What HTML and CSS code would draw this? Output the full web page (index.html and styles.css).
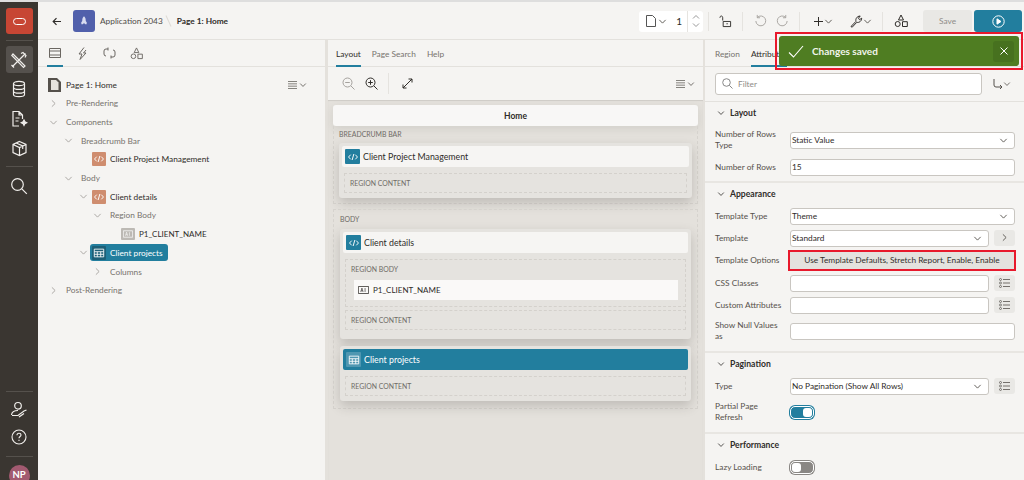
FILE: index.html
```html
<!DOCTYPE html>
<html lang="en">
<head>
  <meta charset="UTF-8">
  <title>Page Designer</title>
  <link rel="stylesheet" href="styles.css">
</head>
<body>
  <svg class="defs" width="0" height="0">
    <symbol id="chev-d" viewBox="0 0 10 10"><path d="M1.5 3.2 5 6.8l3.500-3.600" fill="none" stroke="currentColor"/></symbol>
    <symbol id="chev-r" viewBox="0 0 10 10"><path d="M3.200 1.500 6.800 5 3.200 8.500" fill="none" stroke="currentColor"/></symbol>
    <symbol id="menu" viewBox="0 0 9 8"><path d="M0 .5h9M0 2.830h9M0 5.170h9M0 7.500h9" fill="none" stroke="currentColor" stroke-width=".7"/></symbol>
    <symbol id="code" viewBox="0 0 14 14"><path d="M4.300 4.300 1.800 7l2.500 2.700M9.700 4.300 12.200 7 9.700 9.700M8 3.500 6 10.500" fill="none" stroke="currentColor" stroke-width="1.100"/></symbol>
    <symbol id="table" viewBox="0 0 14 14"><path d="M1.500 2.500h11v9h-11zM1.500 5.500h11M1.500 8.500h11M5 5.500v6M9 5.500v6" fill="none" stroke="currentColor"/></symbol>
    <symbol id="list" viewBox="0 0 11 10"><path d="M4 1.500h7M4 5h7M4 8.500h7" fill="none" stroke="currentColor" stroke-width=".8"/><circle cx="1.500" cy="1.500" r="1" fill="none" stroke="currentColor" stroke-width=".7"/><circle cx="1.500" cy="5" r="1" fill="none" stroke="currentColor" stroke-width=".7"/><circle cx="1.500" cy="8.500" r="1" fill="none" stroke="currentColor" stroke-width=".7"/></symbol>
    <symbol id="shapes" viewBox="0 0 14 14"><path d="M7 1 9.500 6h-5z" fill="none" stroke="currentColor"/><circle cx="3.700" cy="10" r="2.500" fill="none" stroke="currentColor"/><path d="M8.500 7.700h4.800v4.800H8.500z" fill="none" stroke="currentColor"/></symbol>
    <symbol id="wrench" viewBox="0 0 14 14"><path d="M2 12.500 7 7.300C6.300 5 7.800 2.200 11.200 2L9.500 4.200 10.500 5.700 12.700 4.200C12.800 7 10 9 7.800 8.300L3.200 13.200z" fill="none" stroke="currentColor"/></symbol>
    <symbol id="item" viewBox="0 0 14 10"><path d="M.5.500h13v9H.5z" fill="none" stroke="currentColor"/><path d="M3.500 7.500 5 2.500l1.500 5M4 6h2M9 2.500v5" fill="none" stroke="currentColor" stroke-width=".8"/></symbol>
  </svg>

  <!-- Left icon rail -->
  <nav class="rail">
    <div class="logo"><span class="logo-ring"></span></div>
    <div class="rail-sep"></div>
    <div class="rail-btn active">
      <svg width="18" height="18" viewBox="0 0 18 18" fill="none" stroke="currentColor" stroke-width="1.200"><path d="M3 3 15 15l-1.500 1.500L1.800 4.500zM15.500 2.500 2.500 15.500M11 2.500l2-1 3 3-1 2"/><path d="M1.500 14l2.500 2.500"/></svg>
    </div>
    <div class="rail-btn">
      <svg width="16" height="18" viewBox="0 0 16 18" fill="none" stroke="currentColor" stroke-width="1.200"><ellipse cx="8" cy="3.500" rx="5.500" ry="2.200"/><path d="M2.500 3.500v11c0 1.200 2.500 2.200 5.500 2.200s5.500-1 5.500-2.200v-11M2.500 7.200c0 1.200 2.500 2.200 5.500 2.200s5.500-1 5.500-2.200M2.500 10.900c0 1.200 2.500 2.200 5.500 2.200s5.500-1 5.500-2.200"/></svg>
    </div>
    <div class="rail-btn">
      <svg width="18" height="18" viewBox="0 0 18 18" fill="none" stroke="currentColor" stroke-width="1.200"><path d="M9 16H3V1.500h6l3.500 3.500v4M9 1.500V5h3.500M5.500 8h4M5.500 11h3"/><path d="m14 10 .9 1.800 1.800.9-1.800.9-.9 1.800-.9-1.800-1.800-.9 1.800-.9z" fill="currentColor"/></svg>
    </div>
    <div class="rail-btn">
      <svg width="17" height="17" viewBox="0 0 17 17" fill="none" stroke="currentColor" stroke-width="1.200"><path d="M8.500 1.500 15 4.500v8l-6.500 3-6.500-3v-8zM2 4.500l6.500 3 6.500-3M8.500 7.500v8M5.200 3 11.700 6v3"/></svg>
    </div>
    <div class="rail-sep mid"></div>
    <div class="rail-btn">
      <svg width="18" height="18" viewBox="0 0 18 18" fill="none" stroke="currentColor" stroke-width="1.200"><circle cx="7.500" cy="7.500" r="5.800"/><path d="m11.800 11.800 5 5"/></svg>
    </div>
    <div class="rail-fill"></div>
    <div class="rail-sep low"></div>
    <div class="rail-btn flush">
      <svg width="18" height="18" viewBox="0 0 18 18" fill="none" stroke="currentColor" stroke-width="1.200"><circle cx="8" cy="4.800" r="3.300"/><path d="M1.500 14c.3-3 2.500-4.500 6.500-4.500M2 14.500h6l6-4.500 2.500-1M9 16l5-3.500"/></svg>
    </div>
    <div class="rail-btn">
      <svg width="16" height="16" viewBox="0 0 16 16" fill="none" stroke="currentColor" stroke-width="1.100"><circle cx="8" cy="8" r="7"/><path d="M6 6.200C6 4.900 7 4.200 8 4.200s2 .7 2 1.900C10 7.500 8 7.500 8 9.200"/><path d="M8 10.800v1.200"/></svg>
    </div>
    <div class="rail-sep last"></div>
    <div class="avatar">NP</div>
  </nav>

  <div class="app">
    <!-- Top toolbar -->
    <header class="topbar">
      <svg class="back" width="10" height="9" viewBox="0 0 10 9" fill="none" stroke="currentColor" stroke-width="1.200"><path d="M9 4.500H1.500M4.500 1.200 1.200 4.500l3.300 3.300"/></svg>
      <div class="app-icon">
        <svg width="8" height="10" viewBox="0 0 10 12" fill="#d9dcf0"><path d="M5 0c1.700 1.500 2.300 3.500 2.200 6l1.300 2-.3 2H6.500l-.5-1H4l-.5 1H1.800l-.3-2 1.300-2C2.700 3.500 3.300 1.500 5 0z"/></svg>
      </div>
      <span class="app-name">Application 2043</span>
      <span class="crumb-sep"></span>
      <strong class="page-name">Page 1: Home</strong>
      <div class="topbar-fill"></div>
      <div class="page-box">
        <svg width="10" height="12" viewBox="0 0 10 12" fill="none" stroke="#555"><path d="M.5.500h6l3 3v8h-9z"/></svg>
        <svg class="chev" width="9" height="9"><use href="#chev-d"/></svg>
        <span class="page-num">1</span>
        <span class="page-spin">
          <svg width="8" height="8" viewBox="0 0 8 8" fill="none" stroke="#999"><path d="M1 5.500 4 2.500l3 3"/></svg>
          <svg width="8" height="8" viewBox="0 0 8 8" fill="none" stroke="#999"><path d="M1 2.500 4 5.500l3-3"/></svg>
        </span>
      </div>
      <span class="tool-sep first"></span>
      <svg class="tool" width="13" height="14" viewBox="0 0 14 14" fill="none" stroke="currentColor"><path d="M4.500 7.500h8v5.500h-8zM4 6.500V3.500C4 1 1 1 1 3.500"/><path d="M8 10h1.500"/></svg>
      <span class="tool-sep"></span>
      <svg class="tool faded" width="13" height="14" viewBox="0 0 14 14" fill="none" stroke="currentColor"><path d="M3.500 3.200A5.300 5.300 0 1 1 2 7M3.500.5v3h3"/></svg>
      <svg class="tool faded gap" width="13" height="14" viewBox="0 0 14 14" fill="none" stroke="currentColor"><path d="M10.500 3.200A5.300 5.300 0 1 0 12 7M10.500.5v3h-3"/></svg>
      <span class="tool-sep"></span>
      <svg class="tool plus" width="11" height="11" viewBox="0 0 11 11" fill="none" stroke="currentColor"><path d="M5.500 1v9M1 5.500h9"/></svg>
      <svg class="chev" width="9" height="9"><use href="#chev-d"/></svg>
      <svg class="tool wide" width="14" height="14"><use href="#wrench"/></svg>
      <svg class="chev" width="9" height="9"><use href="#chev-d"/></svg>
      <span class="tool-sep"></span>
      <svg class="tool" width="14" height="14"><use href="#shapes"/></svg>
      <button class="btn-save">Save</button>
      <button class="btn-run">
        <svg width="13" height="13" viewBox="0 0 13 13" fill="none" stroke="#fff"><circle cx="6.500" cy="6.500" r="5.700"/><path d="M5 3.800 9 6.500 5 9.200z" fill="#fff"/></svg>
      </button>
    </header>

    <div class="panes">
      <!-- Tree pane -->
      <section class="pane-tree">
        <div class="tabs icon-tabs">
          <span class="icon-tab current">
            <svg width="12" height="10" viewBox="0 0 12 10" fill="none" stroke="currentColor"><path d="M.5.500h11v9H.5zM.5 3h11M.5 7h11"/></svg>
          </span>
          <span class="icon-tab">
            <svg width="11" height="13" viewBox="0 0 11 13" fill="none" stroke="currentColor"><path d="M7 .5 2 7h3l-2 5.500M9 3 6.500 6H9l-6 6.500"/></svg>
          </span>
          <span class="icon-tab">
            <svg width="13" height="12" viewBox="0 0 13 12" fill="none" stroke="currentColor"><path d="M5 2H3Q1 2 1 4v3q0 2 2 2M8 10h2q2 0 2-2V5q0-2-2-2M5 .5V3.500M8 8.500v3"/></svg>
          </span>
          <span class="icon-tab">
            <svg width="13" height="13"><use href="#shapes"/></svg>
          </span>
        </div>
        <div class="tree">
          <div class="tree-head">
            <span class="page-icon">
              <svg width="13" height="14" viewBox="0 0 13 14"><path d="M0 0h9l4 4v10H0z" fill="#55514c"/><path d="M3 2h5l2.500 2.500V12H3z" fill="#e6e3de"/></svg>
            </span>
            <span class="tree-title">Page 1: Home</span>
            <span class="menu-btn"><svg width="9" height="8"><use href="#menu"/></svg><svg width="8" height="8"><use href="#chev-d"/></svg></span>
          </div>
          <div class="node lv1"><svg class="tw" width="9" height="9"><use href="#chev-r"/></svg><span class="group">Pre-Rendering</span></div>
          <div class="node lv1"><svg class="tw" width="9" height="9"><use href="#chev-d"/></svg><span class="group">Components</span></div>
          <div class="node lv2"><svg class="tw" width="9" height="9"><use href="#chev-d"/></svg><span class="group">Breadcrumb Bar</span></div>
          <div class="node lv3 leaf"><span class="node-icon orange"><svg width="12" height="12"><use href="#code"/></svg></span><span>Client Project Management</span></div>
          <div class="node lv2"><svg class="tw" width="9" height="9"><use href="#chev-d"/></svg><span class="group">Body</span></div>
          <div class="node lv3"><svg class="tw" width="9" height="9"><use href="#chev-d"/></svg><span class="node-icon orange"><svg width="12" height="12"><use href="#code"/></svg></span><span>Client details</span></div>
          <div class="node lv4"><svg class="tw" width="9" height="9"><use href="#chev-d"/></svg><span class="group">Region Body</span></div>
          <div class="node lv5"><span class="node-icon grey"><svg width="10" height="8"><use href="#item"/></svg></span><span class="item-name">P1_CLIENT_NAME</span></div>
          <div class="node lv3">
            <svg class="tw" width="9" height="9"><use href="#chev-d"/></svg>
            <span class="pill"><span class="node-icon dark"><svg width="12" height="12"><use href="#table"/></svg></span><span>Client projects</span></span>
          </div>
          <div class="node lv4"><svg class="tw" width="9" height="9"><use href="#chev-r"/></svg><span class="group">Columns</span></div>
          <div class="node lv1"><svg class="tw" width="9" height="9"><use href="#chev-r"/></svg><span class="group">Post-Rendering</span></div>
        </div>
      </section>

      <!-- Layout pane -->
      <section class="pane-layout">
        <div class="tabs text-tabs">
          <span class="text-tab current">Layout</span>
          <span class="text-tab">Page Search</span>
          <span class="text-tab">Help</span>
        </div>
        <div class="layout-tools">
          <svg class="faded" width="13" height="13" viewBox="0 0 13 13" fill="none" stroke="currentColor"><circle cx="5.500" cy="5.500" r="4.500"/><path d="m9 9 3.500 3.500M3.200 5.500h4.600"/></svg>
          <svg width="13" height="13" viewBox="0 0 13 13" fill="none" stroke="currentColor"><circle cx="5.500" cy="5.500" r="4.500"/><path d="m9 9 3.500 3.500M3.200 5.500h4.600M5.500 3.200v4.600"/></svg>
          <span class="tool-sep tall"></span>
          <svg width="11" height="11" viewBox="0 0 11 11" fill="none" stroke="currentColor"><path d="M1 10 10 1M6.500 1H10v3.500M1 6.500V10h3.500"/></svg>
          <span class="menu-btn"><svg width="9" height="8"><use href="#menu"/></svg><svg width="8" height="8"><use href="#chev-d"/></svg></span>
        </div>
        <div class="canvas">
          <div class="page-head">Home</div>
          <div class="drop drop-bar">
            <div class="drop-label">BREADCRUMB BAR</div>
            <div class="card">
              <div class="card-head"><span class="card-icon"><svg width="12" height="12"><use href="#code"/></svg></span>Client Project Management</div>
              <div class="slot">REGION CONTENT</div>
            </div>
          </div>
          <div class="drop drop-body">
            <div class="drop-label">BODY</div>
            <div class="card">
              <div class="card-head"><span class="card-icon"><svg width="12" height="12"><use href="#code"/></svg></span>Client details</div>
              <div class="slot slot-body">
                REGION BODY
                <div class="page-item"><svg width="11" height="8"><use href="#item"/></svg><span class="item-name">P1_CLIENT_NAME</span></div>
              </div>
              <div class="slot slot-tight">REGION CONTENT</div>
            </div>
            <div class="card">
              <div class="card-head selected"><span class="card-icon pale"><svg width="12" height="12"><use href="#table"/></svg></span>Client projects</div>
              <div class="slot">REGION CONTENT</div>
            </div>
          </div>
        </div>
      </section>

      <!-- Property pane -->
      <section class="pane-props">
        <div class="tabs text-tabs props-tabs">
          <span class="text-tab">Region</span>
          <span class="text-tab current">Attributes</span>
        </div>
        <div class="filter-row">
          <div class="filter">
            <svg width="11" height="11" viewBox="0 0 11 11" fill="none" stroke="#888"><circle cx="4.500" cy="4.500" r="3.800"/><path d="m7.300 7.300 3.200 3.200"/></svg>
            Filter
          </div>
          <svg class="route" width="10" height="10" viewBox="0 0 10 10" fill="none" stroke="currentColor"><path d="M1 0v6q0 2 2 2h6M7 6l2 2-2 2"/></svg>
          <svg class="chev" width="8" height="8"><use href="#chev-d"/></svg>
        </div>

        <div class="group-box lead">
          <h3 class="group-title"><svg width="8" height="8"><use href="#chev-d"/></svg>Layout</h3>
          <div class="row tall"><label>Number of Rows<br>Type</label><div class="field select">Static Value<svg width="9" height="9"><use href="#chev-d"/></svg></div></div>
          <div class="row"><label>Number of Rows</label><div class="field">15</div></div>
        </div>

        <div class="group-box">
          <h3 class="group-title"><svg width="8" height="8"><use href="#chev-d"/></svg>Appearance</h3>
          <div class="row"><label>Template Type</label><div class="field select">Theme<svg width="9" height="9"><use href="#chev-d"/></svg></div></div>
          <div class="row"><label>Template</label><div class="with-btn"><div class="field select">Standard<svg width="9" height="9"><use href="#chev-d"/></svg></div><span class="side-btn"><svg width="9" height="9"><use href="#chev-r"/></svg></span></div></div>
          <div class="row options"><label>Template Options</label><div class="options-btn">Use Template Defaults, Stretch Report, Enable, Enable</div></div>
          <div class="row"><label>CSS Classes</label><div class="with-btn"><div class="field"></div><span class="side-btn"><svg width="11" height="10"><use href="#list"/></svg></span></div></div>
          <div class="row"><label>Custom Attributes</label><div class="with-btn"><div class="field"></div><span class="side-btn"><svg width="11" height="10"><use href="#list"/></svg></span></div></div>
          <div class="row tall"><label>Show Null Values<br>as</label><div class="field"></div></div>
        </div>

        <div class="group-box">
          <h3 class="group-title"><svg width="8" height="8"><use href="#chev-d"/></svg>Pagination</h3>
          <div class="row"><label>Type</label><div class="with-btn"><div class="field select">No Pagination (Show All Rows)<svg width="9" height="9"><use href="#chev-d"/></svg></div><span class="side-btn"><svg width="11" height="10"><use href="#list"/></svg></span></div></div>
          <div class="row tall"><label>Partial Page<br>Refresh</label><span class="switch on"><i></i></span></div>
        </div>

        <div class="group-box">
          <h3 class="group-title"><svg width="8" height="8"><use href="#chev-d"/></svg>Performance</h3>
          <div class="row"><label>Lazy Loading</label><span class="switch"><i></i></span></div>
        </div>
      </section>
    </div>
  </div>

  <!-- Success message, floats over the toolbar -->
  <div class="toast-frame">
    <div class="toast">
      <svg width="16" height="13" viewBox="0 0 16 13" fill="none" stroke="#fff" stroke-width="1.100"><path d="M1 7.500 5.500 12 15 1"/></svg>
      <span class="toast-text">Changes saved</span>
      <span class="toast-close"><svg width="8" height="8" viewBox="0 0 8 8" fill="none" stroke="#fff"><path d="m.5.500 7 7M7.500.500l-7 7"/></svg></span>
    </div>
  </div>
</body>
</html>
```

FILE: styles.css
```css
/* General */
html, body {
  height: 100%;
}

body {
  margin: 0;
  display: flex;
  width: 1024px;
  height: 480px;
  box-sizing: border-box;
  padding-top: 2px;
  overflow: hidden;
  background: #dedede;
  color: #2f2c29;
  font-family: Lato, "Open Sans", sans-serif;
  font-size: 8.300px;
}

svg {
  flex: none;
  display: block;
}

.defs {
  position: absolute;
}

.faded {
  color: #a5a29e;
}

/* Icon rail */
.rail {
  width: 38px;
  height: 478px;
  flex: none;
  display: flex;
  flex-direction: column;
  align-items: center;
  overflow: hidden;
  background: #3a3631;
  color: #f1efec;
}

.logo {
  width: 27px;
  height: 26px;
  margin-top: 6px;
  display: flex;
  align-items: center;
  justify-content: center;
  border-radius: 3px;
  background: #c74634;
}

.logo-ring {
  width: 11px;
  height: 5px;
  border: 1.500px solid #fff;
  border-radius: 4px;
}

.rail-sep {
  width: 27px;
  height: 1px;
  flex: none;
  margin: 6px 0 5px;
  background: #55514c;
}

.rail-sep.mid {
  margin-top: 2px;
}

.rail-sep.low {
  margin-bottom: 5px;
}

.rail-sep.last {
  margin: 3px 0 8px;
}

.rail-btn {
  width: 27px;
  height: 27px;
  flex: none;
  margin-bottom: 2.500px;
  display: flex;
  align-items: center;
  justify-content: center;
  border-radius: 3px;
}

.rail-btn.flush {
  margin-bottom: 0;
}

.rail-btn.active {
  background: #55514d;
}

.rail-fill {
  flex: 1;
}

.avatar {
  width: 21px;
  height: 21px;
  flex: none;
  margin-bottom: -6px;
  border-radius: 50%;
  background: #a25a70;
  color: #fff;
  font-size: 9.500px;
  font-weight: 700;
  line-height: 19px;
  text-align: center;
}

/* Main area */
.app {
  flex: 1;
  min-width: 0;
  display: flex;
  flex-direction: column;
  background: #f5f4f2;
}

.topbar {
  height: 38px;
  flex: none;
  display: flex;
  align-items: center;
  padding: 1px 0 0 14px;
  border-bottom: 1px solid #e3e1dd;
  box-sizing: border-box;
}

.back {
  margin-right: 11px;
}

.app-icon {
  width: 22px;
  height: 22px;
  display: flex;
  align-items: center;
  justify-content: center;
  border-radius: 3px;
  background: #5160ab;
}

.app-name {
  margin-left: 5px;
  color: #4f4c48;
}

.crumb-sep {
  width: 1px;
  height: 12px;
  margin: 0 8px 0 5px;
  background: #dedbd6;
  transform: rotate(-25deg);
}

.page-name {
  font-weight: 700;
}

.topbar-fill {
  flex: 1;
}

.page-box {
  width: 64px;
  height: 21px;
  display: flex;
  align-items: center;
  padding-left: 7px;
  box-sizing: border-box;
  border-radius: 3px;
  background: #fff;
}

.page-box .chev {
  margin-left: 2px;
}

.page-num {
  margin-left: auto;
  margin-right: 5px;
  font-size: 10px;
}

.page-spin {
  width: 15px;
  height: 21px;
  display: flex;
  flex-direction: column;
  align-items: center;
  justify-content: center;
  border-left: 1px solid #e6e4e0;
}

.chev {
  color: #55514c;
}

.tool-sep {
  width: 1px;
  height: 19px;
  flex: none;
  margin: 0 11px 0 10px;
  background: #e5e3df;
}

.tool-sep.first {
  margin: 0 10px 0 5px;
}

.tool-sep.tall {
  height: 21px;
}

.tool.gap {
  margin-left: 9px;
}

.tool.plus {
  margin-left: 2px;
}

.tool.wide {
  margin-left: 16px;
}

.btn-save,
.btn-run {
  height: 22px;
  padding: 0;
  border: none;
  font: inherit;
}

.btn-save {
  width: 49px;
  margin-left: 15px;
  border-radius: 3px;
  background: #e9e8e5;
  color: #8f8c88;
}

.btn-run {
  width: 48px;
  margin: 0 2px;
  display: flex;
  align-items: center;
  justify-content: center;
  border-radius: 3px;
  background: #227e9e;
}

.panes {
  flex: 1;
  min-height: 0;
  display: flex;
}

/* Tabs */
.tabs {
  height: 27px;
  flex: none;
  display: flex;
  box-sizing: border-box;
  border-bottom: 1px solid #e3e1dd;
}

.icon-tabs {
  gap: 11px;
  padding-left: 9px;
}

.icon-tab {
  width: 16px;
  display: flex;
  align-items: center;
  justify-content: center;
  color: #6b6762;
}

.icon-tab.current {
  border-bottom: 2px solid #227e9e;
  margin-bottom: -1px;
}

.text-tabs {
  gap: 11px;
  padding-left: 8px;
}

.text-tab {
  line-height: 28px;
  color: #77736e;
}

.text-tab.current {
  color: #2f2c29;
  border-bottom: 2px solid #227e9e;
  margin-bottom: -1px;
}

/* Tree pane */
.pane-tree {
  width: 287px;
  flex: none;
  display: flex;
  flex-direction: column;
  border-right: 3px solid #e4e1dc;
}

.tree {
  padding-top: 8px;
}

.tree-head {
  height: 19px;
  display: flex;
  align-items: center;
  padding: 0 7px 0 10px;
}

.page-icon {
  margin-right: 5px;
}

.tree-title {
  flex: 1;
}

.menu-btn {
  display: flex;
  align-items: center;
  gap: 2px;
  margin-left: auto;
  color: #55514c;
  padding-right: 11px;
}

.node {
  height: 18.700px;
  display: flex;
  align-items: center;
}

.lv1 {
  padding-left: 11px;
}

.lv2 {
  padding-left: 26px;
}

.lv3 {
  padding-left: 41px;
}

.lv3.leaf {
  padding-left: 54px;
}

.lv4 {
  padding-left: 55px;
}

.lv5 {
  padding-left: 83px;
}

.tw {
  color: #a5a29e;
  margin-right: 8px;
}

.lv3 .tw {
  margin-right: 4px;
}

.group {
  color: #77736e;
}

.item-name {
  font-size: 8px;
}

.node-icon {
  width: 14px;
  height: 14px;
  margin-right: 4px;
  display: flex;
  align-items: center;
  justify-content: center;
  flex: none;
  border-radius: 1px;
  color: #fff;
}

.node-icon.orange {
  background: #cf8d6f;
}

.node-icon.grey {
  height: 12px;
  background: #bcb9b4;
}

.node-icon.dark {
  background: #1d5f77;
}

.pill {
  display: flex;
  align-items: center;
  height: 17px;
  margin-left: -2px;
  padding: 0 5px 0 2px;
  border-radius: 3px;
  background: #227e9e;
  color: #fff;
}

/* Layout pane */
.pane-layout {
  width: 375px;
  flex: none;
  display: flex;
  flex-direction: column;
}

.layout-tools {
  height: 33px;
  flex: none;
  display: flex;
  align-items: center;
  gap: 10px;
  padding-left: 14px;
  box-sizing: border-box;
}

.layout-tools .tool-sep {
  margin: 0 3px 0 0;
}

.layout-tools .menu-btn {
  margin-left: auto;
  padding-right: 8px;
}

.canvas {
  flex: 1;
  padding: 5px 5px 0;
  background: #e4e1dc;
  box-shadow: inset 0 1px 1px #cfccc7;
}

.page-head {
  height: 21px;
  border-radius: 3px;
  background: #f8f7f6;
  font-size: 8.500px;
  font-weight: 700;
  line-height: 22px;
  text-align: center;
  box-shadow: 0 3px 8px rgba(60, 55, 50, 0.1);
}

.drop {
  border: 1px dashed #d6d3ce;
  border-top: none;
  padding: 0 6px;
}

.drop-bar {
  height: 78px;
  box-sizing: border-box;
  margin-bottom: 5px;
  padding: 0 5px;
}

.drop-body {
  height: 200px;
  box-sizing: border-box;
  border-top: 1px dashed #d6d3ce;
}

.drop-label,
.slot {
  font-size: 6.900px;
  color: #6f6b66;
}

.drop-label {
  line-height: 17px;
}

.drop-body .drop-label {
  line-height: 19px;
}

.card {
  padding: 3px 3px 5px;
  margin-bottom: 7px;
  border-radius: 3px;
  background: #e5e3df;
  box-shadow: 0 5px 12px rgba(60, 55, 50, 0.22);
}

.card-head {
  height: 21px;
  display: flex;
  align-items: center;
  gap: 3px;
  padding-left: 3px;
  border-radius: 2px;
  background: #f6f5f3;
  color: #2f2c29;
  font-size: 8.800px;
}

.card-head.selected {
  background: #227e9e;
  color: #fff;
}

.card-icon {
  width: 15px;
  height: 15px;
  display: flex;
  align-items: center;
  justify-content: center;
  border-radius: 1px;
  background: #227e9e;
  color: #fff;
}

.card-icon.pale {
  background: #4f97b1;
}

.slot {
  margin: 6px 2px 0;
  padding-left: 5px;
  height: 20px;
  line-height: 19px;
  box-sizing: border-box;
  border: 1px dashed #d4d1cc;
}

.slot-body {
  height: 48px;
}

.slot-tight {
  margin-top: 3px;
  margin-bottom: 4px;
}

.page-item {
  display: flex;
  align-items: center;
  gap: 4px;
  height: 20px;
  margin: 1px 7px 0 3px;
  padding-left: 4px;
  background: #faf9f8;
  color: #2f2c29;
}

/* Property pane */
.pane-props {
  flex: 1;
  min-width: 0;
  border-left: 2px solid #e4e1dc;
  display: flex;
  flex-direction: column;
}

.props-tabs {
  padding-left: 10px;
  gap: 11px;
}

.filter-row {
  height: 35px;
  flex: none;
  display: flex;
  align-items: center;
  padding: 0 0 1px 10px;
  box-sizing: border-box;
  border-bottom: 1px solid #e3e1dd;
}

.filter {
  width: 267px;
  height: 22px;
  display: flex;
  align-items: center;
  gap: 5px;
  padding-left: 6px;
  box-sizing: border-box;
  border: 1px solid #c9c6c1;
  border-radius: 3px;
  background: #fff;
  color: #8f8c88;
}

.route {
  margin-left: 11px;
  color: #55514c;
}

.group-box {
  padding: 0 9px 5px 10px;
  border-bottom: 2px solid #e8e6e2;
}

.group-box.lead {
  padding-bottom: 3px;
}

.group-box.lead .row.tall {
  height: 32px;
}

.group-box:last-child {
  border-bottom: none;
}

.group-title {
  height: 22px;
  margin: 0;
  display: flex;
  align-items: center;
  gap: 5px;
  padding-left: 2px;
  font-size: 8.600px;
  font-weight: 700;
}

.row {
  height: 22px;
  display: grid;
  grid-template-columns: 75px 1fr;
  align-items: center;
}

.row.tall {
  height: 30px;
}

.row.options {
  height: 23px;
}

.row label {
  color: #55514c;
  line-height: 11px;
}

.field {
  height: 17px;
  display: flex;
  align-items: center;
  justify-content: space-between;
  padding: 0 6px 0 1px;
  box-sizing: border-box;
  border: 1px solid #c9c6c1;
  border-radius: 3px;
  background: #fff;
}

.field svg {
  color: #55514c;
}

.with-btn {
  display: flex;
  gap: 5px;
}

.with-btn .field {
  flex: 1;
}

.side-btn {
  width: 21px;
  height: 16px;
  flex: none;
  display: flex;
  align-items: center;
  justify-content: center;
  border-radius: 3px;
  background: #e9e8e5;
  color: #55514c;
}

.options-btn {
  height: 21px;
  line-height: 17px;
  text-align: center;
  box-sizing: border-box;
  border: 2px solid #e8192c;
  margin: 0 -1px 0 -2px;
  background: #e4e2de;
  color: #33302c;
}

.switch {
  width: 24px;
  height: 13px;
  padding: 1px;
  display: flex;
  box-sizing: border-box;
  border: 1px solid #fff;
  border-radius: 5px;
  background: #8a8784;
  box-shadow: 0 0 0 1px #8a8784;
}

.switch i {
  width: 9px;
  border-radius: 3px;
  background: #fff;
}

.switch.on {
  justify-content: flex-end;
  background: #227e9e;
  box-shadow: 0 0 0 1px #227e9e;
}

/* Toast */
.toast-frame {
  position: absolute;
  left: 775px;
  top: 32px;
  width: 248px;
  height: 38px;
  box-sizing: border-box;
  padding: 2px;
  border: 2px solid #e8192c;
}

.toast {
  height: 100%;
  display: flex;
  align-items: center;
  padding: 0 5px 0 9px;
  border-radius: 3px;
  background: #4f7d22;
}

.toast-text {
  margin-left: 8px;
  color: #f2f5ec;
  font-size: 10px;
  font-weight: 700;
}

.toast-close {
  width: 21px;
  height: 21px;
  margin-left: auto;
  display: flex;
  align-items: center;
  justify-content: center;
  border-radius: 3px;
  background: #47711f;
}
```
